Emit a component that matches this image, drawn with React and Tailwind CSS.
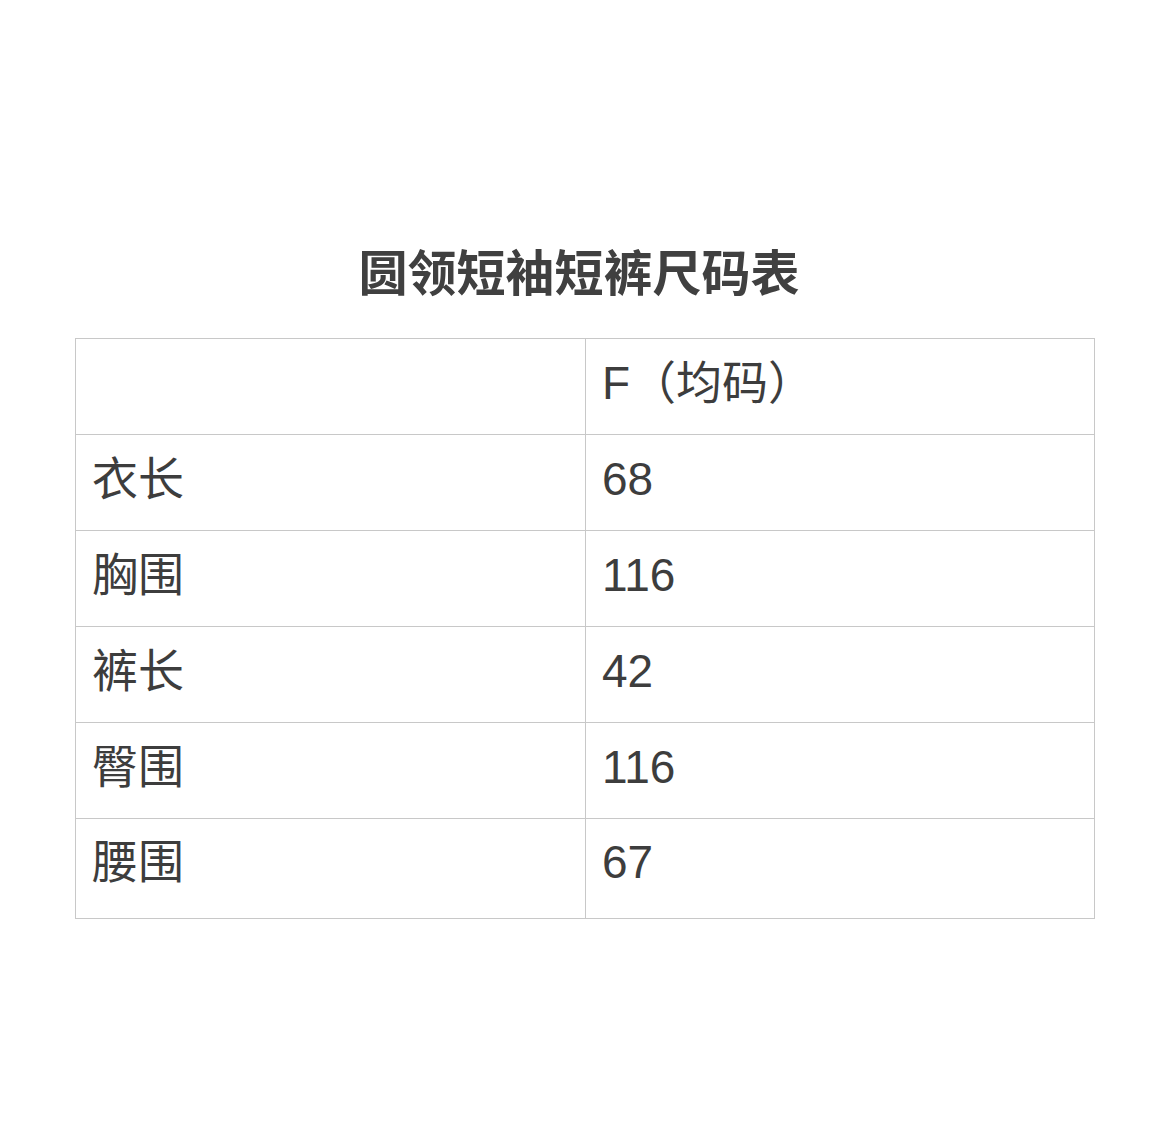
const rows = [
  ["衣长", "68"],
  ["胸围", "116"],
  ["裤长", "42"],
  ["臀围", "116"],
  ["腰围", "67"],
];

export default function App() {
  return (
    <div
      className="w-[1170px] h-[1127px] bg-white text-[#3d3d3d]"
      style={{ fontFamily: '"Liberation Sans", "Noto Sans CJK SC", sans-serif' }}
    >
      <div className="pt-[246px] px-[75px]">
        <h1 className="text-center text-[49px] leading-[56px] font-bold text-[#404040] pr-[12px]">
          圆领短袖短裤尺码表
        </h1>
        <table className="mt-[36px] w-[1020px] border-collapse table-fixed text-[46px]">
          <tbody>
            <tr className="h-[96px]">
              <td className="border border-[#c8c8c8] w-[510px] px-4 pb-[6px]"></td>
              <td className="border border-[#c8c8c8] px-4 pb-[6px]">F（均码）</td>
            </tr>
            {rows.map(([k, v], i) => (
              <tr key={k} className={i === rows.length - 1 ? "h-[100px]" : "h-[96px]"}>
                <td className={`border border-[#c8c8c8] px-4 ${i === rows.length - 1 ? "pb-[12px]" : "pb-[6px]"}`}>{k}</td>
                <td className={`border border-[#c8c8c8] px-4 ${i === rows.length - 1 ? "pb-[12px]" : "pb-[6px]"}`}>{v}</td>
              </tr>
            ))}
          </tbody>
        </table>
      </div>
    </div>
  );
}
